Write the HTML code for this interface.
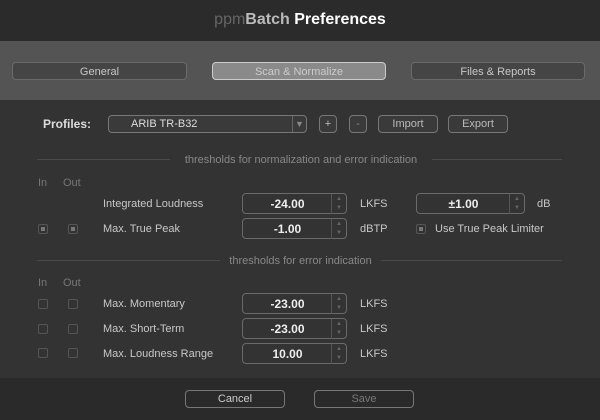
<!DOCTYPE html><html><head><style>
body{margin:0;width:600px;height:420px;background:#2a2a2a;font-family:"Liberation Sans",sans-serif;font-size:11px;color:#c8c8c8;position:relative;overflow:hidden}
div,span{position:absolute;box-sizing:border-box}
.btn{border:1px solid #777;border-radius:4px;background:#3a3a3a;text-align:center;color:#bbb;line-height:17px}
.tab{top:62px;height:18px;border:1px solid #6a6a6a;border-radius:4px;background:#454545;text-align:center;color:#c8c8c8;line-height:18px}
.box{height:21px;border:1px solid #6a6a6a;border-radius:4px;background:#333}
.box b{position:absolute;left:0;right:14px;top:0;line-height:20px;text-align:center;color:#eee;font-size:12px}
.box i{position:absolute;right:0;top:0;width:14px;height:19px;border-left:1px solid #555;font-style:normal;font-size:6px;color:#666;line-height:9px;text-align:center;padding-top:1px}
.cb{width:10px;height:10px;border:1px solid #555;border-radius:2px;background:#333}
.cb.on::after{content:"";position:absolute;left:2px;top:2px;width:4px;height:4px;background:#777}
.line{height:1px;background:#4a4a4a}
.sm{color:#888}
</style></head><body>
<div style="left:0;top:0;width:600px;height:41px;background:#2b2b2b;text-align:center;line-height:40px;font-size:16px;color:#fff;font-weight:bold"><span style="position:static;color:#666;font-weight:normal">ppm</span><span style="position:static;color:#bbb">Batch</span> Preferences</div>
<div style="left:0;top:41px;width:600px;height:59px;background:#545454"></div>
<div class="tab" style="left:12px;width:175px">General</div>
<div class="tab" style="left:212px;width:174px;background:#8a8a8a;border-color:#ccc;color:#ccc">Scan &amp; Normalize</div>
<div class="tab" style="left:411px;width:174px">Files &amp; Reports</div>
<div style="left:0;top:100px;width:600px;height:278px;background:#333"></div>
<div style="left:43px;top:117px;font-weight:bold;font-size:12px;color:#ddd">Profiles:</div>
<div class="btn" style="left:108px;top:115px;width:199px;height:18px;text-align:left;padding-left:22px;color:#ddd">ARIB TR-B32<span style="right:0;top:0;width:14px;height:16px;border-left:1px solid #666;color:#888;font-size:9px;text-align:center">▼</span></div>
<div class="btn" style="left:319px;top:115px;width:18px;height:18px">+</div>
<div class="btn" style="left:349px;top:115px;width:18px;height:18px;color:#888">-</div>
<div class="btn" style="left:378px;top:115px;width:60px;height:18px">Import</div>
<div class="btn" style="left:448px;top:115px;width:60px;height:18px">Export</div>
<div class="line" style="left:37px;top:159px;width:133px"></div>
<div class="line" style="left:432px;top:159px;width:130px"></div>
<div class="sm" style="left:170px;top:154px;width:262px;text-align:center">thresholds for normalization and error indication</div>
<div class="sm" style="left:38px;top:177px;color:#777">In</div><div class="sm" style="left:63px;top:177px;color:#777">Out</div>
<div style="left:103px;top:198px">Integrated Loudness</div>
<div class="box" style="left:242px;top:193px;width:105px"><b>-24.00</b><i>▲<br>▼</i></div>
<div style="left:360px;top:198px">LKFS</div>
<div class="box" style="left:416px;top:193px;width:109px"><b>±1.00</b><i>▲<br>▼</i></div>
<div style="left:537px;top:198px">dB</div>
<div class="cb on" style="left:38px;top:224px"></div><div class="cb on" style="left:68px;top:224px"></div>
<div style="left:103px;top:223px">Max. True Peak</div>
<div class="box" style="left:242px;top:218px;width:105px"><b>-1.00</b><i>▲<br>▼</i></div>
<div style="left:360px;top:223px">dBTP</div>
<div class="cb on" style="left:416px;top:224px"></div>
<div style="left:435px;top:223px">Use True Peak Limiter</div>
<div class="line" style="left:37px;top:260px;width:183px"></div>
<div class="line" style="left:381px;top:260px;width:181px"></div>
<div class="sm" style="left:220px;top:255px;width:161px;text-align:center">thresholds for error indication</div>
<div class="sm" style="left:38px;top:277px;color:#777">In</div><div class="sm" style="left:63px;top:277px;color:#777">Out</div>
<div class="cb" style="left:38px;top:299px"></div><div class="cb" style="left:68px;top:299px"></div>
<div style="left:103px;top:298px">Max. Momentary</div>
<div class="box" style="left:242px;top:293px;width:105px"><b>-23.00</b><i>▲<br>▼</i></div>
<div style="left:360px;top:298px">LKFS</div>
<div class="cb" style="left:38px;top:324px"></div><div class="cb" style="left:68px;top:324px"></div>
<div style="left:103px;top:323px">Max. Short-Term</div>
<div class="box" style="left:242px;top:318px;width:105px"><b>-23.00</b><i>▲<br>▼</i></div>
<div style="left:360px;top:323px">LKFS</div>
<div class="cb" style="left:38px;top:348px"></div><div class="cb" style="left:68px;top:348px"></div>
<div style="left:103px;top:348px">Max. Loudness Range</div>
<div class="box" style="left:242px;top:343px;width:105px"><b>10.00</b><i>▲<br>▼</i></div>
<div style="left:360px;top:348px">LKFS</div>
<div class="btn" style="left:185px;top:390px;width:100px;height:18px;background:#2a2a2a;color:#ccc">Cancel</div>
<div class="btn" style="left:314px;top:390px;width:100px;height:18px;background:#2a2a2a;color:#777">Save</div>
</body></html>
